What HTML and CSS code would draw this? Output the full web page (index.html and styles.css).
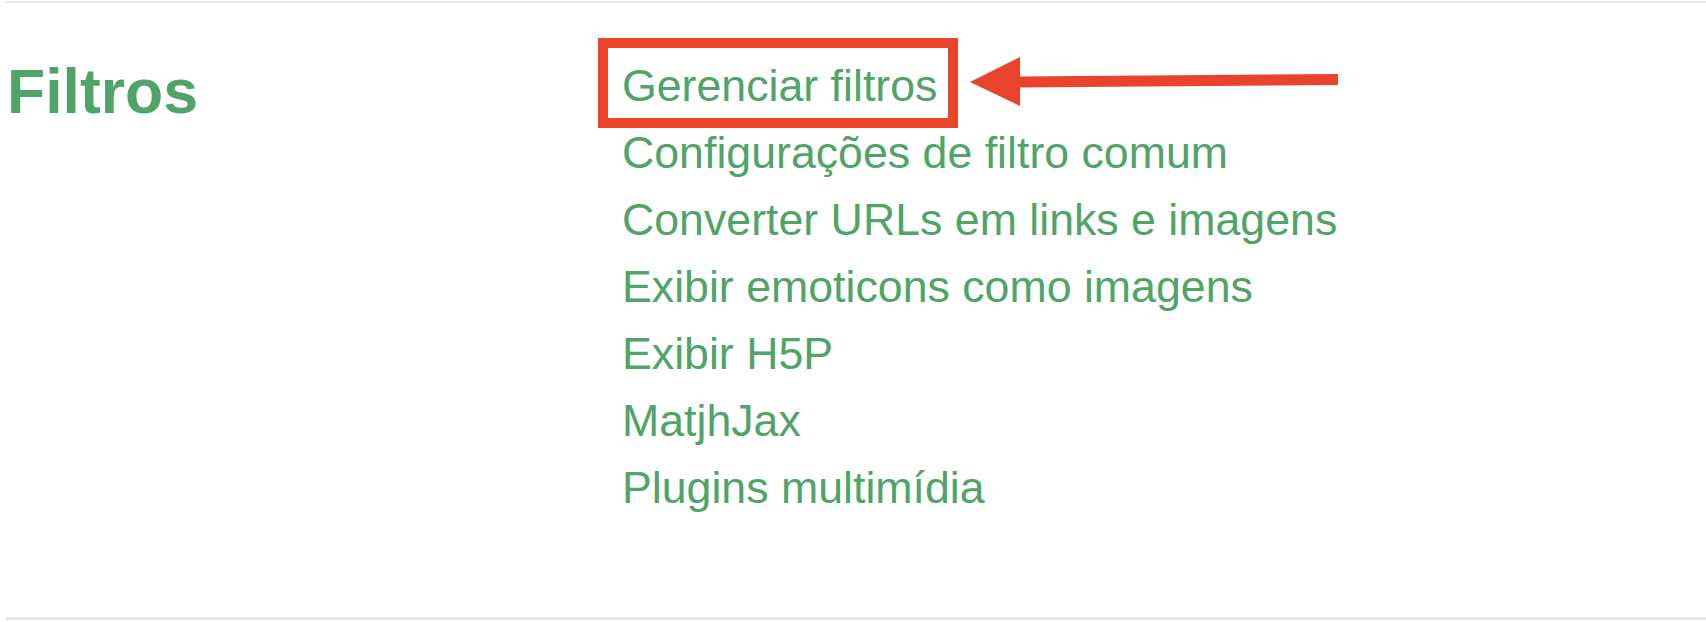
FILE: index.html
```html
<!DOCTYPE html>
<html lang="pt-BR">
<head>
  <meta charset="UTF-8">
  <title>Filtros</title>
  <link rel="stylesheet" href="styles.css">
</head>
<body>
  <div class="secao">
    <h2 class="titulo">Filtros</h2>
    <ul class="links">
      <li><a href="#" class="destaque">Gerenciar filtros</a></li>
      <li><a href="#">Configurações de filtro comum</a></li>
      <li><a href="#">Converter URLs em links e imagens</a></li>
      <li><a href="#">Exibir emoticons como imagens</a></li>
      <li><a href="#">Exibir H5P</a></li>
      <li><a href="#">MatjhJax</a></li>
      <li><a href="#">Plugins multimídia</a></li>
    </ul>
  </div>

  <!-- seta apontando para o link destacado -->
  <svg class="seta" width="385" height="65" viewBox="0 0 385 65">
    <polygon points="10,32 60,7 60,56" fill="#e9432b"/>
    <polygon points="58,26.5 378,24 378,35 58,37.5" fill="#e9432b"/>
  </svg>
</body>
</html>
```

FILE: styles.css
```css
body {
  margin: 0;
  background: #fff;
  font-family: "Liberation Sans", Arial, sans-serif;
}

.secao {
  margin: 1px 0 2px 6px;
  border-top: 2px solid #e6e6e6;
  border-bottom: 3px solid #e6e6e6;
  padding: 49px 0 96px;
  display: grid;
  grid-template-columns: 616px 1fr;
}

.titulo {
  margin: 2px 0 0 1px;
  font-size: 62.5px;
  line-height: 1.2;
  font-weight: bold;
  color: #50a467;
}

.links {
  list-style: none;
  margin: 0;
  padding: 0;
}

.links li {
  font-size: 44.7px;
  line-height: 67px;
}

.links a {
  color: #50a467;
  text-decoration: none;
}

.destaque {
  position: relative;
  display: inline-block;
}

.destaque::after {
  content: "";
  position: absolute;
  top: -14px;
  bottom: -9px;
  left: -24px;
  right: -21px;
  border: 10px solid #e9432b;
}

.seta {
  position: absolute;
  left: 960px;
  top: 50px;
}
```
